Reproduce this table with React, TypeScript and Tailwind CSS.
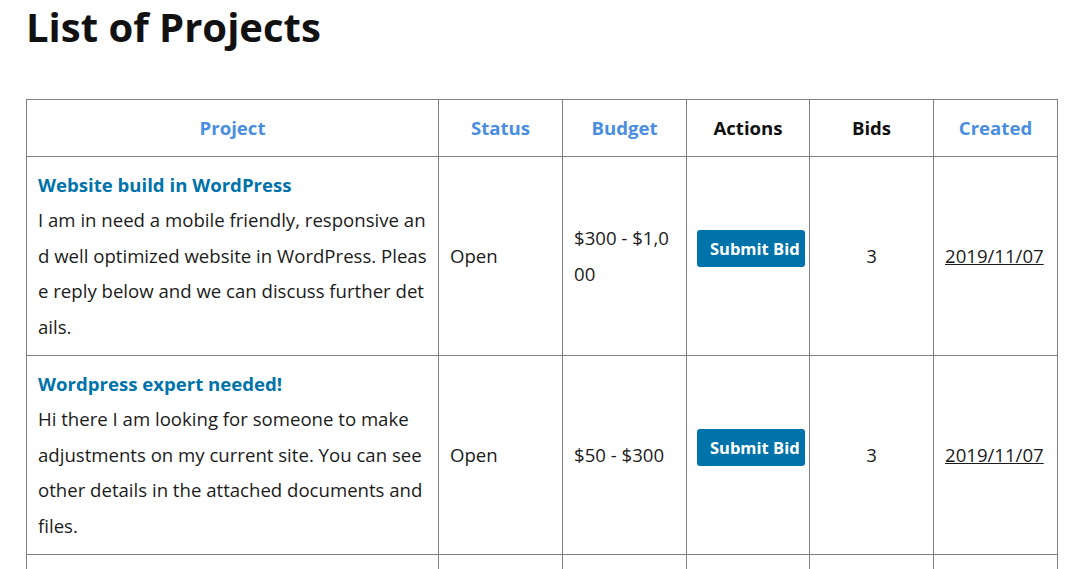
import React from "react";

const rows = [
  {
    title: "Website build in WordPress",
    desc: "I am in need a mobile friendly, responsive and well optimized website in WordPress. Please reply below and we can discuss further details.",
    breakAll: true,
    status: "Open",
    budget: "$300 - $1,000",
    bids: "3",
    created: "2019/11/07",
  },
  {
    title: "Wordpress expert needed!",
    desc: "Hi there I am looking for someone to make adjustments on my current site. You can see other details in the attached documents and files.",
    breakAll: false,
    status: "Open",
    budget: "$50 - $300",
    bids: "3",
    created: "2019/11/07",
  },
];

export default function App() {
  return (
    <div
      className="bg-white h-[569px] overflow-hidden px-[26px] text-[#1b1b1b]"
      style={{ fontFamily: "'Open Sans', 'Noto Sans', sans-serif" }}
    >
      <h1 className="text-[40px] leading-[54px] font-bold text-[#111] mb-[45px]">
        List of Projects
      </h1>
      <table className="border-collapse table-fixed w-[1032px] text-[18.6px] leading-[35.6px]">
        <thead>
          <tr>
            <th className="w-[412px] border border-[#808080] py-[10px] px-[10px] font-bold text-[#4a8ee0]">Project</th>
            <th className="w-[124px] border border-[#808080] py-[10px] px-[10px] font-bold text-[#4a8ee0]">Status</th>
            <th className="w-[124px] border border-[#808080] py-[10px] px-[10px] font-bold text-[#4a8ee0]">Budget</th>
            <th className="w-[123px] border border-[#808080] py-[10px] px-[10px] font-bold text-[#111]">Actions</th>
            <th className="w-[124px] border border-[#808080] py-[10px] px-[10px] font-bold text-[#111]">Bids</th>
            <th className="w-[124px] border border-[#808080] py-[10px] px-[10px] font-bold text-[#4a8ee0]">Created</th>
          </tr>
        </thead>
        <tbody>
          {rows.map((r, i) => (
            <tr key={i}>
              <td
                className={
                  r.breakAll
                    ? "border border-[#808080] py-[10px] px-[11px] align-middle break-all"
                    : "border border-[#808080] py-[10px] px-[11px] align-middle"
                }
              >
                <a className="font-bold text-[#0073aa]">{r.title}</a>
                <br />
                {r.desc}
              </td>
              <td className="border border-[#808080] py-[10px] px-[11px] align-middle">{r.status}</td>
              <td className="border border-[#808080] py-[10px] px-[11px] align-middle break-all">{r.budget}</td>
              <td className="border border-[#808080] py-[10px] px-[10px] align-middle">
                <div className="w-[108px] h-[37px] mb-[14px] bg-[#0073aa] rounded-[3px] overflow-hidden whitespace-nowrap pl-[13px] text-white font-bold text-[16.5px] leading-[37px]">
                  Submit Bid
                </div>
              </td>
              <td className="border border-[#808080] py-[10px] px-[10px] align-middle text-center">{r.bids}</td>
              <td className="border border-[#808080] py-[10px] px-[11px] align-middle">
                <span className="underline">{r.created}</span>
              </td>
            </tr>
          ))}
          <tr>
            <td className="border border-[#808080] h-[200px]"></td>
            <td className="border border-[#808080]"></td>
            <td className="border border-[#808080]"></td>
            <td className="border border-[#808080]"></td>
            <td className="border border-[#808080]"></td>
            <td className="border border-[#808080]"></td>
          </tr>
        </tbody>
      </table>
    </div>
  );
}
